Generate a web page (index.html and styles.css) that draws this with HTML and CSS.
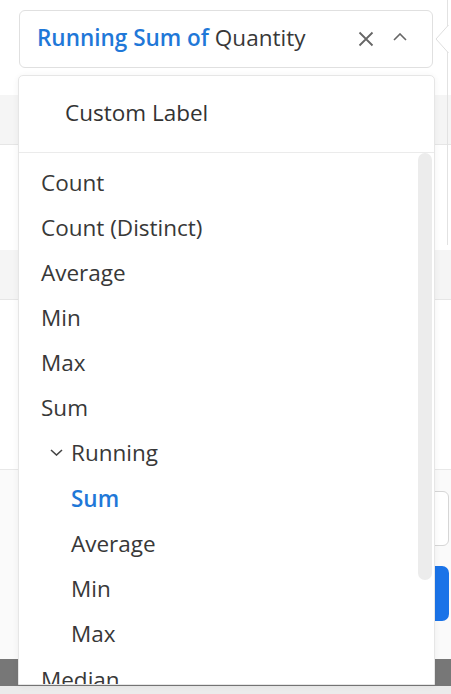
FILE: index.html
```html
<!DOCTYPE html>
<html lang="en">
<head>
  <meta charset="UTF-8" />
  <title>Aggregation Picker</title>
  <link rel="stylesheet" href="styles.css">
</head>
<body>
  <div class="page">
    <div class="blank blank-top"></div>
    <div class="band"></div>
    <div class="blank blank-mid"></div>
    <div class="band"></div>
    <div class="blank blank-low"></div>
    <div class="footer-area">
      <div class="fake-input"></div>
      <div class="fake-btn"></div>
    </div>
    <div class="dark-bar"></div>
    <div class="bottom-strip"></div>
  </div>

  <!-- edge of the side popover behind the picker -->
  <div class="popover-edge">
    <svg class="caret" width="14" height="28" viewBox="0 0 14 28">
      <path d="M13.5 0 L1 14 L13.5 28" fill="#fff" stroke="#dedede" stroke-width="1" />
    </svg>
  </div>

  <div class="picker">
    <div class="select-box">
      <div class="select-value"><span class="agg">Running Sum of</span> Quantity</div>
      <svg class="icon-x" width="16" height="16" viewBox="0 0 16 16">
        <path d="M1.5 1.5 L14.5 14.5 M14.5 1.5 L1.5 14.5" stroke="#666" stroke-width="1.8" fill="none" />
      </svg>
      <svg class="icon-up" width="14" height="8" viewBox="0 0 14 8">
        <path d="M1 7 L7 1 L13 7" stroke="#666" stroke-width="1.6" fill="none" />
      </svg>
    </div>

    <div class="dropdown">
      <div class="custom-label">Custom Label</div>
      <div class="list-wrap">
        <ul class="items">
          <li>Count</li>
          <li>Count (Distinct)</li>
          <li>Average</li>
          <li>Min</li>
          <li>Max</li>
          <li>Sum</li>
          <li class="group">
            <svg width="13" height="7" viewBox="0 0 13 7">
              <path d="M1 1 L6.5 6 L12 1" stroke="#444" stroke-width="1.6" fill="none" />
            </svg>
            Running
          </li>
          <li class="sub selected">Sum</li>
          <li class="sub">Average</li>
          <li class="sub">Min</li>
          <li class="sub">Max</li>
          <li>Median</li>
        </ul>
        <div class="scroll-track">
          <div class="thumb"></div>
        </div>
      </div>
    </div>
  </div>
</body>
</html>
```

FILE: styles.css
```css
body {
  margin: 0;
  padding: 0;
  font-family: 'Open Sans', 'DejaVu Sans', sans-serif;
  background: white;
  color: #333;
  overflow: hidden;
}

.page {
  display: flex;
  flex-direction: column;
}

.blank-top {
  height: 95px;
}

.band {
  height: 49px;
  background-color: #f5f5f5;
  border-bottom: 1px solid #e6e6e6;
}

.blank-mid {
  height: 105px;
}

.blank-low {
  height: 169px;
}

.footer-area {
  height: 189px;
  background-color: #fafafa;
  border-top: 1px solid #e8e8e8;
  display: flex;
  flex-direction: column;
  align-items: flex-end;
  padding-right: 2px;
}

.fake-input {
  margin-top: 21px;
  width: 200px;
  height: 53px;
  background: white;
  border: 1px solid #d6d6d6;
  border-radius: 6px;
}

.fake-btn {
  margin-top: 20px;
  width: 200px;
  height: 55px;
  background-color: #1a73e8;
  border-radius: 7px;
}

.dark-bar {
  height: 27px;
  background-color: #777;
}

.bottom-strip {
  height: 9px;
  background-color: #ebebeb;
}

.popover-edge {
  position: absolute;
  left: 447px;
  top: 0;
  height: 245px;
  border-left: 1px solid #e2e2e2;
}

.caret {
  position: absolute;
  left: -13px;
  top: 25px;
}

.picker {
  position: absolute;
  top: 10px;
  left: 19px;
  width: 414px;
}

.select-box {
  height: 56px;
  border: 1px solid #e0e0e0;
  border-radius: 6px;
  background: white;
  display: flex;
  align-items: center;
  padding: 0 25px 0 17px;
}

.select-value {
  flex: 1;
  font-size: 22.5px;
  color: #383838;
  white-space: nowrap;
  padding-bottom: 4px;
}

.agg {
  color: #1f78d8;
  font-weight: 600;
}

.icon-x {
  margin-right: 19px;
}

.icon-up {
  margin-top: -4px;
}

.dropdown {
  position: absolute;
  top: 65px;
  left: -1px;
  width: 415px;
  height: 608px;
  background: white;
  border: 1px solid #e6e6e6;
  border-radius: 5px 5px 0 0;
  box-shadow: 0 1px 6px rgba(0, 0, 0, 0.06);
  overflow: hidden;
}

.custom-label {
  font-size: 22.5px;
  line-height: 45px;
  padding: 14px 0 17px 46px;
  border-bottom: 1px solid #ebebeb;
  color: #333;
}

.list-wrap {
  display: flex;
}

.items {
  flex: 1;
  list-style: none;
  margin: 0;
  padding: 7px 0 0 0;
}

.items li {
  font-size: 22.5px;
  line-height: 45px;
  padding-left: 22px;
  color: #383838;
  white-space: nowrap;
}

.items li.group {
  display: flex;
  align-items: center;
  gap: 8px;
  padding-left: 31px;
  line-height: 45.5px;
}

.items li.sub {
  padding-left: 52px;
  line-height: 45.3px;
}

.items li.selected {
  color: #1f78d8;
  font-weight: 600;
}

.scroll-track {
  width: 14px;
  margin-right: 2px;
}

.thumb {
  height: 427px;
  background-color: #ececec;
  border-radius: 7px;
}
```
